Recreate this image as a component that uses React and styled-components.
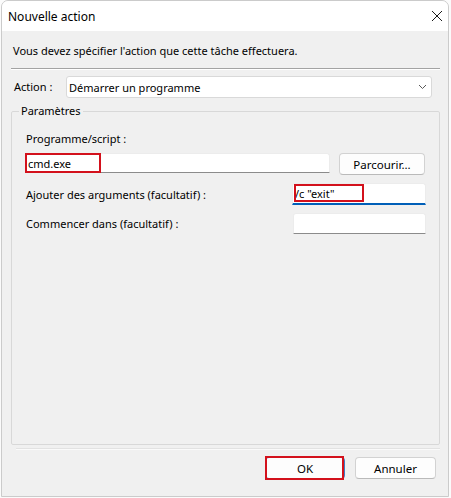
import React from 'react'
import styled, { createGlobalStyle } from 'styled-components'

const GlobalStyle = createGlobalStyle`
  html, body { margin: 0; padding: 0; background: #fbfbfb; }
  body {
    font-family: "Noto Sans", "Liberation Sans", sans-serif;
    font-size: 11px;
    color: #000;
  }
`

const Window = styled.div`
  margin-left: 1px;
  width: 448px;
  height: 497px;
  box-sizing: border-box;
  border: 1px solid #cbcbcb;
  border-radius: 7px 7px 0 0;
  background: #f0f0f0;
  display: flex;
  flex-direction: column;
  overflow: hidden;
`

const TitleBar = styled.div`
  height: 30px;
  flex: none;
  background: #fff;
  display: flex;
  align-items: center;
  justify-content: space-between;
  padding: 0 5px 0 6px;
  font-size: 12px;
`

const CloseBtn = styled.div`
  width: 12px;
  height: 12px;
  display: flex;
  align-items: center;
  justify-content: center;
`

const Body = styled.div`
  flex: 1;
  min-height: 0;
  display: flex;
  flex-direction: column;
  padding: 0 8px 0 9px;
`

const Intro = styled.div`
  margin-top: 12px;
  padding-left: 2px;
  line-height: 16px;
`

const Separator = styled.div`
  margin-top: 9px;
  height: 1px;
  background: #a3a3a3;
  box-shadow: 0 1px 0 #fff;
`

const ActionRow = styled.div`
  margin-top: 7px;
  display: flex;
  align-items: center;
  padding-left: 3px;
`

const ActionLabel = styled.div`
  width: 52px;
  line-height: 16px;
`

const Combo = styled.div`
  width: 366px;
  height: 22px;
  box-sizing: border-box;
  background: #fff;
  border: 1px solid #d9d9d9;
  border-radius: 3px;
  display: flex;
  align-items: center;
  justify-content: space-between;
  padding: 0 4px 0 2px;
`

const Group = styled.fieldset`
  margin: 5px 0 0 0;
  flex: 1;
  min-height: 0;
  box-sizing: border-box;
  border: 1px solid #d8d8d8;
  border-radius: 2px;
  padding: 0 14px;
  min-inline-size: 0;
`

const Legend = styled.legend`
  margin-left: -7px;
  padding: 0 2px;
  line-height: 16px;
`

const FieldLabel = styled.div`
  margin-top: ${p => p.$top || 0}px;
  line-height: 16px;
`

const Row = styled.div`
  margin-top: ${p => p.$top}px;
  display: flex;
  align-items: ${p => p.$align || 'center'};
  justify-content: space-between;
  gap: 9px;
`

const Field = styled.div`
  position: relative;
  flex: ${p => (p.$width ? 'none' : '1')};
  width: ${p => (p.$width ? p.$width + 'px' : 'auto')};
  margin-right: ${p => p.$right || 0}px;
`

const TextBox = styled.input`
  display: block;
  width: 100%;
  height: ${p => p.$h}px;
  box-sizing: border-box;
  margin: 0;
  font: inherit;
  color: #000;
  background: #fff;
  border: 1px solid #ececec;
  border-bottom: ${p => (p.$focus ? '2px solid #005fb8' : '1px solid #8b8b8b')};
  border-radius: 3px 3px 0 0;
  padding: 0 0 0 ${p => p.$pad || 2}px;
  outline: none;
`

const Button = styled.button`
  position: relative;
  flex: none;
  width: ${p => p.$w}px;
  height: 22px;
  box-sizing: border-box;
  margin: 0;
  padding: 0;
  font: inherit;
  font-size: 11.5px;
  color: #000;
  background: #fdfdfd;
  border: 1px solid ${p => (p.$primary ? '#3c7fc4' : '#d2d2d2')};
  border-bottom-color: ${p => (p.$primary ? '#2a6cb4' : '#bababa')};
  border-radius: 4px;
`

const Mark = styled.div`
  position: absolute;
  box-sizing: border-box;
  border: 2px solid #d3111c;
  pointer-events: none;
`

const Footer = styled.div`
  flex: none;
  display: flex;
  flex-direction: column;
  padding-bottom: 17px;
`

const FooterLine = styled.div`
  margin: 3px 0 0 5px;
  height: 1px;
  background: #e2e2e2;
  box-shadow: 0 1px 0 #fafafa;
`

const Buttons = styled.div`
  margin-top: 8px;
  display: flex;
  justify-content: flex-end;
  gap: 10px;
  padding-right: 4px;
`

export default function App() {
  return (
    <>
      <GlobalStyle />
      <Window>
        <TitleBar>
          <span>Nouvelle action</span>
          <CloseBtn>
            <svg width="12" height="12" viewBox="0 0 12 12">
              <path d="M1 1 L11 11 M11 1 L1 11" stroke="#1b1b1b" strokeWidth="1" fill="none" />
            </svg>
          </CloseBtn>
        </TitleBar>

        <Body>
          <Intro>Vous devez spécifier l'action que cette tâche effectuera.</Intro>
          <Separator />

          <ActionRow>
            <ActionLabel>Action :</ActionLabel>
            <Combo>
              <span>Démarrer un programme</span>
              <svg width="9" height="6" viewBox="0 0 9 6">
                <path d="M1 1 L4.5 4.5 L8 1" stroke="#5a5a5a" strokeWidth="1" fill="none" />
              </svg>
            </Combo>
          </ActionRow>

          <Group>
            <Legend>Paramètres</Legend>

            <FieldLabel $top={12}>Programme/script :</FieldLabel>
            <Row $top={6} $align="flex-start">
              <Field>
                <TextBox $h={20} $pad={1} defaultValue="cmd.exe" readOnly />
                <Mark style={{ left: -1, top: 0, width: 76, height: 20 }} />
              </Field>
              <Button $w={86}>Parcourir...</Button>
            </Row>

            <Row $top={8}>
              <span>Ajouter des arguments (facultatif) :</span>
              <Field $width={134} $right={-1}>
                <TextBox $h={22} $pad={2} $focus defaultValue={'/c "exit"'} readOnly />
                <Mark style={{ left: 2, top: 1, width: 70, height: 18 }} />
              </Field>
            </Row>

            <Row $top={8}>
              <span>Commencer dans (facultatif) :</span>
              <Field $width={133} $right={-1}>
                <TextBox $h={21} readOnly />
              </Field>
            </Row>
          </Group>

          <Footer>
            <FooterLine />
            <Buttons>
              <Button $w={80} $primary>
                OK
                <Mark style={{ left: -1, top: -2, width: 79, height: 24 }} />
              </Button>
              <Button $w={81}>Annuler</Button>
            </Buttons>
          </Footer>
        </Body>
      </Window>
    </>
  )
}
